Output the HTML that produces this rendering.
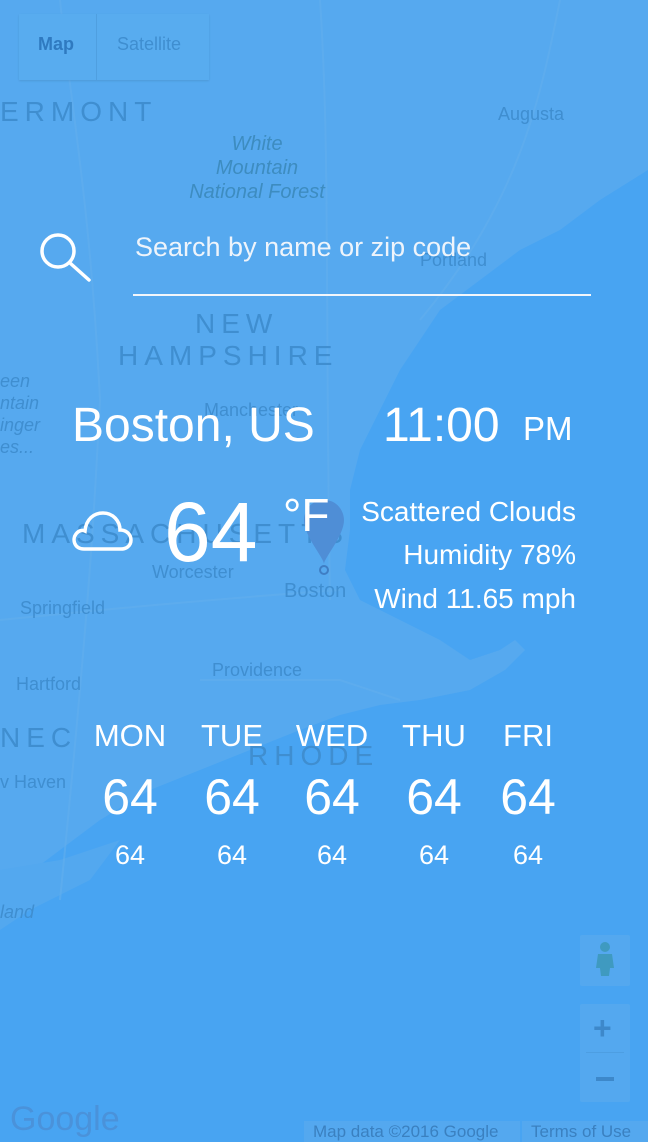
<!DOCTYPE html>
<html><head><meta charset="utf-8"><style>
html,body{margin:0;padding:0;}
body{width:648px;height:1142px;position:relative;overflow:hidden;background:#48a4f2;font-family:"Liberation Sans",sans-serif;color:#fff;}
.abs{position:absolute;}
.ml{position:absolute;color:#3f8ed0;font-family:"Liberation Sans",sans-serif;}
.w{position:absolute;color:#fff;white-space:nowrap;}
</style></head><body>
<svg class="abs" style="left:0;top:0" width="648" height="1142">
<path d="M0,0 L648,0 L648,170 L600,200 L560,230 L520,250 L480,280 L440,310 L420,340 L400,370 L380,410 L360,450 L350,490 L350,530 L345,570 L360,600 L400,620 L440,640 L470,660 L500,650 L515,640 L525,650 L505,670 L470,690 L420,700 L380,705 L340,715 L300,730 L250,750 L200,770 L150,790 L100,820 L60,850 L20,880 L0,890 Z" fill="#56a9ef"/>
<path d="M0,870 L60,860 L120,840 L90,880 L30,910 L0,930 Z" fill="#53a8ef"/>
<g stroke="#63afec" stroke-width="2" fill="none" opacity=".6">
<path d="M60,0 C70,100 90,200 100,400 C95,500 90,600 60,900"/>
<path d="M320,0 C330,150 325,300 330,600"/>
<path d="M0,620 C100,610 200,600 340,590"/>
<path d="M200,680 L340,680 L400,700"/>
<path d="M560,0 C540,100 520,200 420,320"/>
</g>
</svg>
<div class="abs" style="left:19px;top:14px;width:190px;height:66px;background:#58acef;box-shadow:0 1px 2px rgba(0,0,0,.1)"></div>
<div class="abs" style="left:96px;top:14px;width:1px;height:66px;background:#4f9fe0"></div>
<div class="ml" style="left:38px;top:34px;font-size:18px;font-weight:bold;color:#2f7ac0">Map</div>
<div class="ml" style="left:117px;top:34px;font-size:18px">Satellite</div>
<div class="ml" style="left:0;top:96px;font-size:28px;letter-spacing:6px">ERMONT</div>
<div class="ml" style="left:182px;top:132px;font-size:20px;font-style:italic;text-align:center;line-height:24px;width:150px;color:#3d8cc0">White<br>Mountain<br>National Forest</div>
<div class="ml" style="left:498px;top:104px;font-size:18px">Augusta</div>
<div class="ml" style="left:420px;top:250px;font-size:18px">Portland</div>
<div class="ml" style="left:195px;top:308px;font-size:28px;letter-spacing:6px">NEW</div>
<div class="ml" style="left:118px;top:340px;font-size:28px;letter-spacing:6px">HAMPSHIRE</div>
<div class="ml" style="left:0px;top:370px;font-size:18px;font-style:italic;line-height:22px">een<br>ntain<br>inger<br>es...</div>
<div class="ml" style="left:204px;top:400px;font-size:18px">Manchester</div>
<div class="ml" style="left:22px;top:518px;font-size:28px;letter-spacing:6px">MASSACHUSETTS</div>
<div class="ml" style="left:152px;top:562px;font-size:18px">Worcester</div>
<div class="ml" style="left:284px;top:580px;font-size:20px">Boston</div>
<div class="ml" style="left:20px;top:598px;font-size:18px">Springfield</div>
<div class="ml" style="left:212px;top:660px;font-size:18px">Providence</div>
<div class="ml" style="left:16px;top:674px;font-size:18px">Hartford</div>
<div class="ml" style="left:0;top:722px;font-size:28px;letter-spacing:6px">NEC</div>
<div class="ml" style="left:248px;top:740px;font-size:28px;letter-spacing:6px">RHODE</div>
<div class="ml" style="left:0;top:772px;font-size:18px">v Haven</div>
<div class="ml" style="left:0;top:902px;font-size:18px;font-style:italic">land</div>
<svg class="abs" style="left:302px;top:498px" width="44" height="80"><path d="M22,2 C8,2 2,14 2,22 C2,38 22,60 22,66 C22,60 42,38 42,22 C42,14 36,2 22,2Z" fill="#4f8ed6"/><circle cx="22" cy="72" r="4" fill="none" stroke="#3f7ec4" stroke-width="2"/></svg>
<svg class="abs" style="left:34px;top:227px" width="60" height="58"><circle cx="24" cy="24" r="16" fill="none" stroke="#fff" stroke-width="3.5"/><line x1="36" y1="36" x2="55" y2="53" stroke="#fff" stroke-width="3.5" stroke-linecap="round"/></svg>
<div class="w" style="left:135px;top:232px;font-size:27px;color:#eef4fb">Search by name or zip code</div>
<div class="abs" style="left:133px;top:294px;width:458px;height:2px;background:#f2f6fb"></div>
<div class="w" style="left:72px;top:398px;font-size:48px">Boston, US</div>
<div class="w" style="left:383px;top:398px;font-size:48px">11:00</div>
<div class="w" style="left:523px;top:410px;font-size:33px">PM</div>
<svg class="abs" style="left:70px;top:505px" width="64" height="48"><path d="M14,44 C4,44 2,34 6,29 C9,25 13,25 15,26 C16,14 24,8 33,8 C43,8 50,16 50,25 C57,25 61,30 61,35 C61,41 56,44 51,44 Z" fill="none" stroke="#fff" stroke-width="3.5"/></svg>
<div class="w" style="left:164px;top:484px;font-size:84px">64</div>
<div class="w" style="left:283px;top:488px;font-size:46px">°F</div>
<div class="w" style="right:72px;top:496px;font-size:28px">Scattered Clouds</div>
<div class="w" style="right:72px;top:539px;font-size:28px">Humidity 78%</div>
<div class="w" style="right:72px;top:583px;font-size:28px">Wind 11.65 mph</div>
<div class="w" style="left:80px;top:718px;width:100px;text-align:center;font-size:31px">MON</div>
<div class="w" style="left:182px;top:718px;width:100px;text-align:center;font-size:31px">TUE</div>
<div class="w" style="left:282px;top:718px;width:100px;text-align:center;font-size:31px">WED</div>
<div class="w" style="left:384px;top:718px;width:100px;text-align:center;font-size:31px">THU</div>
<div class="w" style="left:478px;top:718px;width:100px;text-align:center;font-size:31px">FRI</div>
<div class="w" style="left:80px;top:768px;width:100px;text-align:center;font-size:50px">64</div>
<div class="w" style="left:182px;top:768px;width:100px;text-align:center;font-size:50px">64</div>
<div class="w" style="left:282px;top:768px;width:100px;text-align:center;font-size:50px">64</div>
<div class="w" style="left:384px;top:768px;width:100px;text-align:center;font-size:50px">64</div>
<div class="w" style="left:478px;top:768px;width:100px;text-align:center;font-size:50px">64</div>
<div class="w" style="left:80px;top:840px;width:100px;text-align:center;font-size:27px">64</div>
<div class="w" style="left:182px;top:840px;width:100px;text-align:center;font-size:27px">64</div>
<div class="w" style="left:282px;top:840px;width:100px;text-align:center;font-size:27px">64</div>
<div class="w" style="left:384px;top:840px;width:100px;text-align:center;font-size:27px">64</div>
<div class="w" style="left:478px;top:840px;width:100px;text-align:center;font-size:27px">64</div>
<div class="abs" style="left:580px;top:935px;width:50px;height:51px;background:#54a8ef;border-radius:2px"></div>
<svg class="abs" style="left:594px;top:940px" width="22" height="40"><circle cx="11" cy="7" r="5" fill="#3f9ac0"/><path d="M4,14 L18,14 L20,28 L16,28 L15,36 L7,36 L6,28 L2,28Z" fill="#3f9ac0"/></svg>
<div class="abs" style="left:580px;top:1004px;width:50px;height:98px;background:#54a8ef;border-radius:2px"></div>
<div class="abs" style="left:586px;top:1052px;width:38px;height:1px;background:#4d9ee2"></div>
<div class="ml" style="left:593px;top:1010px;font-size:32px;font-weight:bold;color:#3d88ca">+</div>
<div class="abs" style="left:596px;top:1077px;width:18px;height:4px;background:#3d88ca"></div>
<div class="ml" style="left:10px;top:1100px;font-size:34px;color:#4a92da">Google</div>
<div class="abs" style="left:304px;top:1121px;width:344px;height:21px;background:#54a8ef"></div>
<div class="abs" style="left:520px;top:1121px;width:2px;height:21px;background:#48a4f2"></div>
<div class="ml" style="left:313px;top:1122px;font-size:17px;color:#3a80c0">Map data ©2016 Google</div>
<div class="ml" style="left:531px;top:1122px;font-size:17px;color:#3a80c0">Terms of Use</div>
</body></html>
